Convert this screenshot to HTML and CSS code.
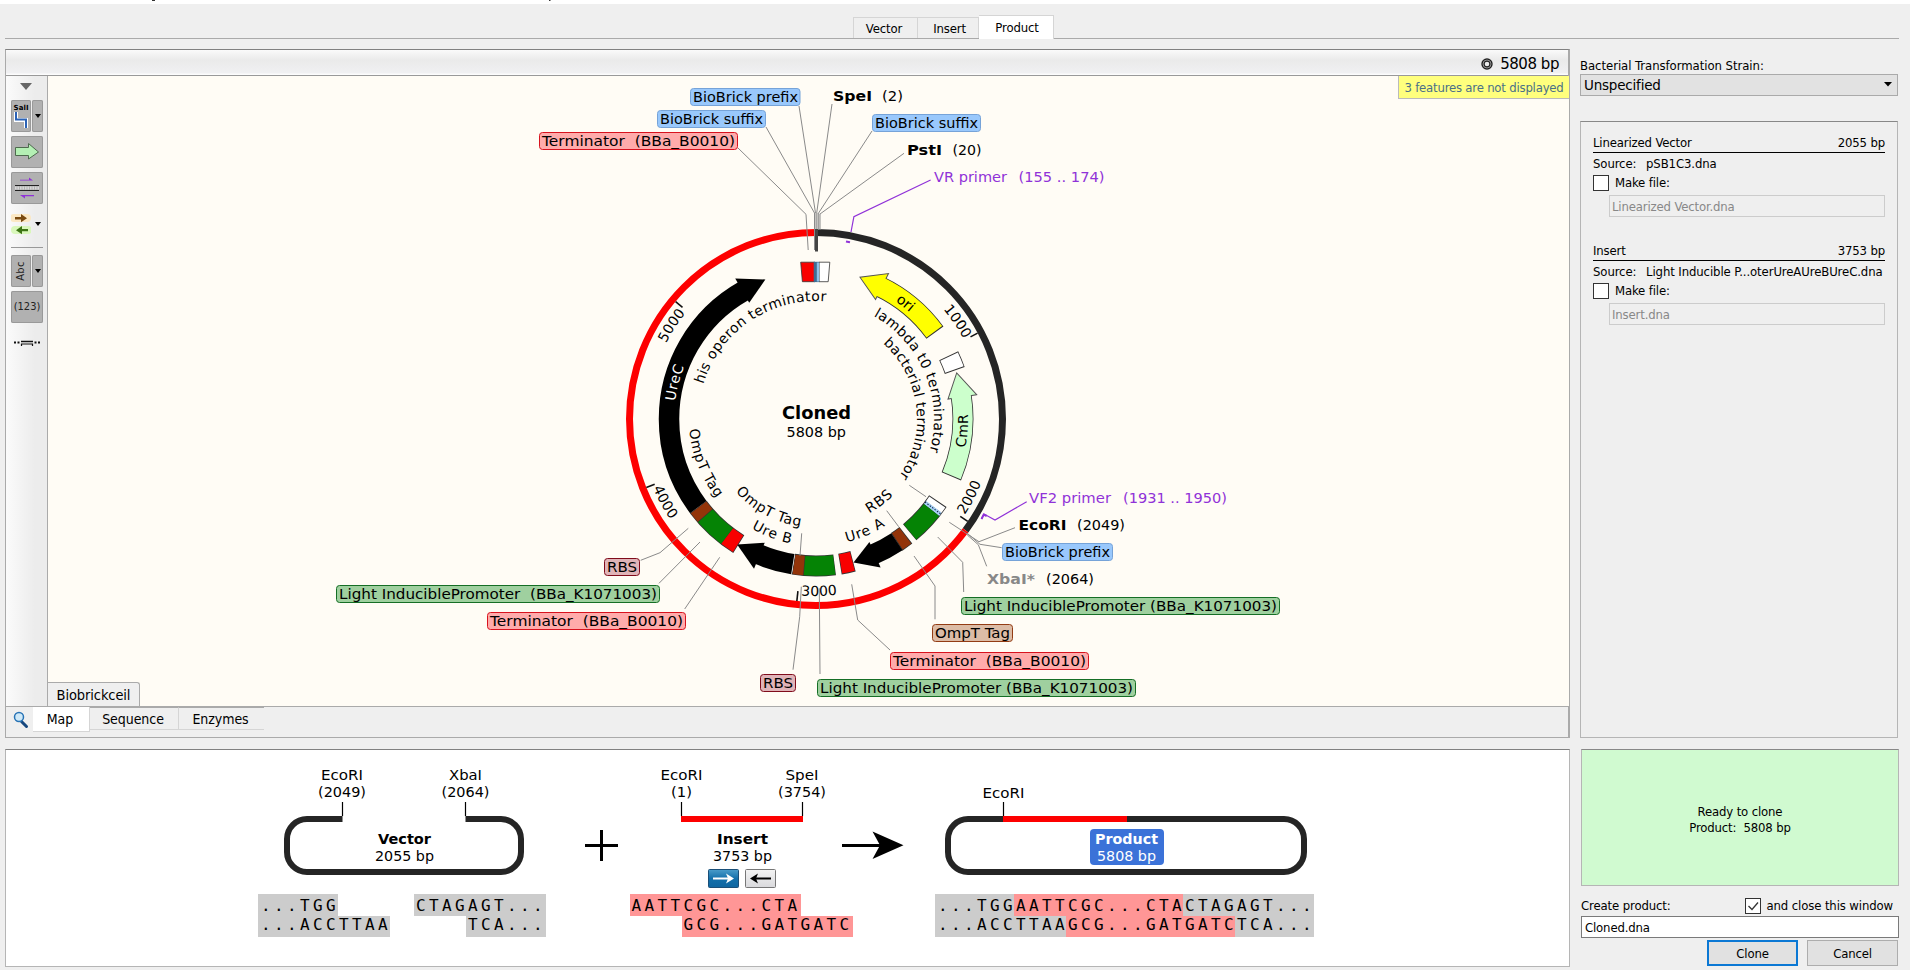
FILE: index.html
```html
<!DOCTYPE html>
<html lang="en">
<head>
<meta charset="utf-8">
<title>Insert Fragment</title>
<link rel="stylesheet" href="styles.css">
</head>
<body>
<div class="strip"><svg width="600" height="4"><path d="M152 0h3v1h-3zM549 0h1.500v1h-1.500z" fill="#333"/></svg></div>
<nav class="steps"><span class="step">Vector</span><span class="step">Insert</span><span class="step on">Product</span></nav>
<main class="work">
  <section class="left">
    <div class="viewer">
      <header class="head">
        <svg width="12" height="12"><circle cx="6" cy="6" r="4" fill="none" stroke="#222" stroke-width="3.400"/><circle cx="6" cy="6" r="4" fill="none" stroke="#aaa" stroke-width=".8"/></svg>
        <span>5808 bp</span>
      </header>
      <div class="body">
        <aside class="tools">
          <svg class="tri" width="12" height="8"><path d="M0 0h12L6 7z" fill="#666"/></svg>
          <div class="split">
            <span class="btn main"><svg width="20" height="32"><text x="2.500" y="9.500" class="sal" textLength="15">SalI</text><path d="M5 12v8h10v8" fill="none" stroke="#fff" stroke-width="4"/><path d="M5 12v7.500h10v8.500" fill="none" stroke="#2b62b5" stroke-width="2"/></svg></span>
            <span class="btn drop"><i class="car"></i></span>
          </div>
          <span class="btn"><svg width="32" height="32"><path d="M4.500 11.500h13v-4l10 8.500-10 7v-3.500h-13z" fill="#b4f0b4" stroke="#4e6a4e"/></svg></span>
          <span class="btn"><svg width="32" height="32"><path d="M9 8.500h13l-4-3v2.200H9zM23 23H9l5 3.500v-2.300h9z" fill="#9032d8"/><path d="M4 13.500h24M4 18.500h24" stroke="#222"/><path d="M4 16h24" stroke="#d8d8d8" stroke-width="3" stroke-dasharray="1.500 1"/></svg></span>
          <div class="split">
            <span class="flat main"><svg width="20" height="32"><path d="M3 10h13" stroke="#fbe8c4" stroke-width="8" stroke-linecap="round"/><path d="M4 22h13" stroke="#d9f7bb" stroke-width="8" stroke-linecap="round"/><path d="M4 9h6V6l6 4.200-6 4V11.500H4z" fill="#7a4a10"/><path d="M17 21h-6v-3l-6 4.200 6 4v-3h6z" fill="#3c7414"/></svg></span>
            <span class="flat drop"><i class="car"></i></span>
          </div>
          <hr>
          <div class="split">
            <span class="btn main"><span class="abc">Abc</span></span>
            <span class="btn drop"><i class="car"></i></span>
          </div>
          <span class="btn num">(123)</span>
          <span class="flat"><svg width="32" height="32"><path d="M3 15.500h2M6.500 15.500h2M23.500 15.500h2M27 15.500h2" stroke="#111" stroke-width="2"/><path d="M10 14.500h12" stroke="#111" stroke-width="1.500"/><path d="M10.500 19v-2h11v2" fill="none" stroke="#111" stroke-width="1.200"/></svg></span>
        </aside>
        <div class="canvas">
<svg class="map" width="1521" height="630" viewBox="48 76 1521 630">
  <defs>
    <path id="c118" d="M0-118A118 118 0 0 1 0 118A118 118 0 0 1 0-118"/>
    <path id="c101" d="M0-101A101 101 0 0 1 0 101A101 101 0 0 1 0-101"/>
    <path id="c142" d="M0-142A142 142 0 0 1 0 142A142 142 0 0 1 0-142"/>
    <path id="c168" d="M0-168A168 168 0 0 1 0 168A168 168 0 0 1 0-168"/>
    <path id="w177" d="M0 177A177 177 0 0 0 0-177A177 177 0 0 0 0 177"/>
    <path id="w152" d="M0 152A152 152 0 0 0 0-152A152 152 0 0 0 0 152"/>
    <path id="w127" d="M0 127A127 127 0 0 0 0-127A127 127 0 0 0 0 127"/>
    <path id="w108" d="M0 108.500A108.500 108.500 0 0 0 0-108.500A108.500 108.500 0 0 0 0 108.500"/>
  </defs>
  <g transform="translate(816 419)">
    <!-- backbone -->
    <g transform="rotate(-90)" fill="none" stroke-width="7">
      <circle r="186.500" pathLength="360" stroke="#252525" stroke-dasharray="126.700 360"/>
      <circle r="186.500" pathLength="360" stroke="#fd0000" stroke-dasharray="233.300 360" stroke-dashoffset="-126.700"/>
    </g>
    <g stroke="#111" stroke-width="1.600">
      <path d="M0-175V-183" transform="rotate(62)"/><path d="M0-174V-183" transform="rotate(124)"/><path d="M0-173V-183" transform="rotate(186)"/><path d="M0-174V-183" transform="rotate(248)"/><path d="M0-174V-183" transform="rotate(309.900)"/>
    </g>
    <!-- feature outlines and arrowheads -->
    <g transform="rotate(-90)" class="seg" stroke="#333" stroke-width="21">
      <circle r="147" pathLength="360" stroke-dasharray="28.400 360" stroke-dashoffset="-25.600"/>
      <circle r="147" pathLength="360" stroke-dasharray="32 360" stroke-dashoffset="-81"/>
      <circle r="147" pathLength="360" stroke-dasharray="6.200 360" stroke-dashoffset="-64.500"/>
      <circle r="147" pathLength="360" stroke-dasharray="16.400 360" stroke-dashoffset="-124"/>
      <circle r="147" pathLength="360" stroke-dasharray="4.400 360" stroke-dashoffset="-142.300"/>
      <circle r="147" pathLength="360" stroke-dasharray="5.200 360" stroke-dashoffset="-165.400"/>
      <circle r="147" pathLength="360" stroke-dasharray="16.200 360" stroke-dashoffset="-172.700"/>
      <circle r="147" pathLength="360" stroke-dasharray="21.500 360" stroke-dashoffset="-211.700"/>
    </g>
    <g stroke-width="1">
      <path d="M0-162.500V-133.500L-23.900-146.500Z" transform="rotate(26.500)" fill="#ff0" stroke="#555"/>
      <path d="M0-162.500V-133.500L-24.500-146Z" transform="rotate(81.400)" fill="#cfc" stroke="#555"/>
      <path d="M0-162V-134L22.800-146.500Z" transform="rotate(156.500)"/>
      <path d="M0-162V-134L24.800-146.200Z" transform="rotate(202.500)"/>
      <path d="M0-162V-134L25.700-146.200Z" transform="rotate(330.100)"/>
    </g>
    <g transform="rotate(-90)" class="seg" stroke-width="19.400">
      <circle r="147" pathLength="360" stroke="#ff0" stroke-dasharray="27.900 360" stroke-dashoffset="-25.700"/>
      <circle r="147" pathLength="360" stroke="#cfc" stroke-dasharray="32 360" stroke-dashoffset="-80.600"/>
      <circle r="147" pathLength="360" stroke="#fff" stroke-dasharray="5.500 360" stroke-dashoffset="-64.850"/>
      <circle r="147" pathLength="360" stroke="#fff" stroke-dasharray="2.400 360" stroke-dashoffset="-124.400"/>
      <circle r="147" pathLength="360" stroke="#a9d3f8" stroke-dasharray="1.500 360" stroke-dashoffset="-126.700"/>
      <circle r="147" pathLength="360" stroke="#058305" stroke-dasharray="12 360" stroke-dashoffset="-128.200"/>
      <circle r="147" pathLength="360" stroke="#933409" stroke-dasharray="3.800 360" stroke-dashoffset="-142.600"/>
      <circle r="147" pathLength="360" stroke="#000" stroke-width="20.500" stroke-dasharray="10.400 360" stroke-dashoffset="-146.600"/>
      <circle r="147" pathLength="360" stroke="#f90000" stroke-dasharray="4.700 360" stroke-dashoffset="-165.650"/>
      <circle r="147" pathLength="360" stroke="#058305" stroke-dasharray="11.600 360" stroke-dashoffset="-172.900"/>
      <circle r="147" pathLength="360" stroke="#933409" stroke-dasharray="3.900 360" stroke-dashoffset="-184.700"/>
      <circle r="147" pathLength="360" stroke="#fff" stroke-dasharray=".2 360" stroke-dashoffset="-188.850"/>
      <circle r="147" pathLength="360" stroke="#000" stroke-width="20.500" stroke-dasharray="13.800 360" stroke-dashoffset="-189.100"/>
      <circle r="147" pathLength="360" stroke="#f90000" stroke-dasharray="5.200 360" stroke-dashoffset="-212"/>
      <circle r="147" pathLength="360" stroke="#058305" stroke-dasharray="11.500 360" stroke-dashoffset="-217.300"/>
      <circle r="147" pathLength="360" stroke="#933409" stroke-dasharray="4 360" stroke-dashoffset="-229"/>
      <circle r="147" pathLength="360" stroke="#000" stroke-width="20.500" stroke-dasharray="97.300 360" stroke-dashoffset="-233.200"/>
    </g>
    <path d="M-15.300-156.800H-1V-137.300H-13.600z" fill="#f90000" stroke="#333" stroke-width=".8"/>
    <path d="M3-156.800H13.800L12.200-137.300H3z" fill="#fff" stroke="#333" stroke-width=".8"/>
    <path d="M-2.300-157.200h5.500v20.300h-5.500z" fill="#3d6d92"/><path d="M.8-156.500h2.200v19H.8z" fill="#8fc0e8"/>
    <path d="M0-137V-157" transform="rotate(127.300)" stroke="#124" stroke-dasharray="1.500 1.500"/>
    <!-- curved captions -->
    <g class="lbl">
      <text transform="rotate(287.100)" textLength="160"><textPath href="#c118">his operon terminator</textPath></text>
      <text transform="rotate(29.200)" textLength="158"><textPath href="#c118">lambda t0 terminator</textPath></text>
      <text transform="rotate(41.600)" textLength="146"><textPath href="#c101">bacterial terminator</textPath></text>
      <text transform="rotate(34)"><textPath href="#c142">ori</textPath></text>
      <text transform="rotate(277.200)" fill="#fff" textLength="36"><textPath href="#c142">UreC</textPath></text>
      <text transform="rotate(49.300)" textLength="36"><textPath href="#c168">1000</textPath></text>
      <text transform="rotate(296.800)" textLength="36"><textPath href="#c168">5000</textPath></text>
      <text transform="rotate(-57.200)" textLength="36"><textPath href="#w177">2000</textPath></text>
      <text transform="rotate(4.800)" textLength="36"><textPath href="#w177">3000</textPath></text>
      <text transform="rotate(67)" textLength="36"><textPath href="#w177">4000</textPath></text>
      <text transform="rotate(-79)" textLength="34"><textPath href="#w152">CmR</textPath></text>
      <text transform="rotate(85.300)" textLength="75"><textPath href="#w127">OmpT Tag</textPath></text>
      <text transform="rotate(47.800)" textLength="75"><textPath href="#w108">OmpT Tag</textPath></text>
      <text transform="rotate(30.500)" textLength="42"><textPath href="#w127">Ure B</textPath></text>
      <text transform="rotate(-14)" textLength="42"><textPath href="#w127">Ure A</textPath></text>
      <text transform="rotate(-29.500)" textLength="30"><textPath href="#w108">RBS</textPath></text>
    </g>
  </g>
  <!-- leader lines -->
  <g class="lead">
    <path d="M799 106L815.500 213M832 104L816.700 213M766 127L814.500 213M738 148L806 214.300 808.200 250M872 131L818.400 213.300M904 153.300L820 214"/>
    <path d="M814.500 213V250M817 213V250M818.700 213V230M820 214V230M816 213V250"/>
    <path d="M909.300 485.300L926 496.700M886.700 510.700L898.700 526.700M801.700 533.300L800 555.700"/>
    <path d="M688.300 528.300L660 552.700 640.700 560.300M700 542L659 583.300M719.700 557.300L684.700 609M801.300 586.700L799.700 616.700 793 669.700M819.300 588.300L820 674"/>
    <path d="M851.700 584.300L857.700 620 890 650M914 556L935 586V619.300M937.700 537L962.700 562.300 963.700 592M949.300 522.300L979 541.700 1015 527.700M967.300 533.300L980 544.300 1001.700 547.700M967.300 535L978.300 544.700 986.700 566.300"/>
    <path d="M816.500 229V251.500" stroke="#444" stroke-width="3"/>
  </g>
  <g class="primer">
    <path d="M930.600 180L853.900 216.700 851 232"/><path d="M846 241.500l4 .8" stroke-width="2"/><path d="M981.500 519L984 514 995 520 1026.700 501.700"/><path d="M981.500 519l2.200-4.500 3 1.500" stroke-width="2"/>
  </g>
  <!-- boxed labels -->
  <g class="box">
    <g fill="#99c8fc" stroke="#76a3d8">
      <rect x="690.500" y="88.500" width="109.500" height="17" rx="3"/><rect x="657.500" y="110.500" width="108" height="17" rx="3"/><rect x="872.500" y="114.500" width="108" height="17" rx="3"/><rect x="1002.500" y="543.500" width="110" height="17" rx="3"/>
    </g>
    <g fill="#ffabab" stroke="#d8121e">
      <rect x="539.500" y="132.500" width="198" height="17" rx="3"/><rect x="487.500" y="612.500" width="198" height="17" rx="3"/><rect x="890.500" y="652.500" width="198" height="17" rx="3"/>
    </g>
    <g fill="#9fd09f" stroke="#156e25">
      <rect x="336.500" y="585.500" width="323" height="17" rx="3"/><rect x="961.500" y="597.500" width="318" height="17" rx="3"/><rect x="817.500" y="679.500" width="318" height="17" rx="3"/>
    </g>
    <g fill="#e0b4b8" stroke="#800c1c"><rect x="604.500" y="558.500" width="35" height="17" rx="3"/><rect x="760.500" y="674.500" width="35" height="17" rx="3"/></g>
    <rect x="932.500" y="624.500" width="80" height="17" rx="3" fill="#dcbca6" stroke="#933c14"/>
  </g>
  <g class="lbl flatlbl">
    <text x="693" y="102" textLength="105" lengthAdjust="spacingAndGlyphs">BioBrick prefix</text>
    <text x="660" y="124" textLength="103" lengthAdjust="spacingAndGlyphs">BioBrick suffix</text>
    <text x="875" y="128" textLength="103" lengthAdjust="spacingAndGlyphs">BioBrick suffix</text>
    <text x="1005" y="557" textLength="105" lengthAdjust="spacingAndGlyphs">BioBrick prefix</text>
    <text x="542" y="146" textLength="193" lengthAdjust="spacingAndGlyphs">Terminator &#160;(BBa_B0010)</text>
    <text x="490" y="626" textLength="193" lengthAdjust="spacingAndGlyphs">Terminator &#160;(BBa_B0010)</text>
    <text x="893" y="666" textLength="193" lengthAdjust="spacingAndGlyphs">Terminator &#160;(BBa_B0010)</text>
    <text x="339" y="599" textLength="318" lengthAdjust="spacingAndGlyphs">Light InduciblePromoter &#160;(BBa_K1071003)</text>
    <text x="964" y="611" textLength="313" lengthAdjust="spacingAndGlyphs">Light InduciblePromoter (BBa_K1071003)</text>
    <text x="820" y="693" textLength="313" lengthAdjust="spacingAndGlyphs">Light InduciblePromoter (BBa_K1071003)</text>
    <text x="607" y="572" textLength="30" lengthAdjust="spacingAndGlyphs">RBS</text>
    <text x="763" y="688" textLength="30" lengthAdjust="spacingAndGlyphs">RBS</text>
    <text x="935" y="638" textLength="75" lengthAdjust="spacingAndGlyphs">OmpT Tag</text>
    <text x="833" y="101" class="b" textLength="39" lengthAdjust="spacingAndGlyphs">SpeI</text><text x="882" y="101" textLength="21" lengthAdjust="spacingAndGlyphs">(2)</text>
    <text x="907" y="155" class="b" textLength="35" lengthAdjust="spacingAndGlyphs">PstI</text><text x="952.500" y="155" textLength="29" lengthAdjust="spacingAndGlyphs">(20)</text>
    <text x="1018.500" y="530" class="b" textLength="48" lengthAdjust="spacingAndGlyphs">EcoRI</text><text x="1077" y="530" textLength="48" lengthAdjust="spacingAndGlyphs">(2049)</text>
    <text x="987" y="583.500" class="b" fill="#888" textLength="48" lengthAdjust="spacingAndGlyphs">XbaI*</text><text x="1046" y="583.500" textLength="48" lengthAdjust="spacingAndGlyphs">(2064)</text>
    <g fill="#9032d8"><text x="934" y="182" textLength="73" lengthAdjust="spacingAndGlyphs">VR primer</text><text x="1018.500" y="182" textLength="86" lengthAdjust="spacingAndGlyphs">(155 .. 174)</text><text x="1029" y="502.500" textLength="82" lengthAdjust="spacingAndGlyphs">VF2 primer</text><text x="1123" y="502.500" textLength="104" lengthAdjust="spacingAndGlyphs">(1931 .. 1950)</text></g>
    <text x="782" y="418.500" class="b big" textLength="69" lengthAdjust="spacingAndGlyphs">Cloned</text>
    <text x="786.500" y="437" textLength="59.500" lengthAdjust="spacingAndGlyphs">5808 bp</text>
  </g>
</svg>
          <span class="note">3 features are not displayed</span>
          <span class="file">Biobrickceil</span>
        </div>
      </div>
      <footer class="views">
        <svg class="mag" width="16" height="20"><path d="M8.500 11.500l5 5" stroke="#16477e" stroke-width="3" stroke-linecap="round"/><circle cx="6" cy="7" r="4.500" fill="#cfe9f8" stroke="#2773b5" stroke-width="1.500"/></svg>
        <span class="view on">Map</span><span class="view seq">Sequence</span><span class="view enz">Enzymes</span>
      </footer>
    </div>
    <div class="scheme">
<svg width="1563" height="216" viewBox="6 750 1563 216">
  <g fill="none" stroke="#252525" stroke-width="6">
    <path d="M342.500 819H307A20 20 0 0 0 287 839V852A20 20 0 0 0 307 872H501A20 20 0 0 0 521 852V839A20 20 0 0 0 501 819H465.500"/>
    <rect x="948" y="819" width="356" height="53" rx="20"/>
    <path d="M681 819H803M1003 819H1127" stroke="#fd0000"/>
  </g>
  <path d="M342.500 802v14M465.500 802v14M681.500 802v14M802.500 802v14M1003.500 802v14" stroke="#000" stroke-width="1.200"/>
  <path d="M585 845.500H618M601.500 830V861M842 845.500H885" stroke="#000" stroke-width="3"/>
  <path d="M872.500 831.500L903.500 845.300 872.500 859 880 845.300z"/>
  <rect x="1090" y="829" width="74" height="36" rx="4" fill="#3b72d8"/>
  <g class="lbl mid flatlbl">
    <text x="342" y="780" textLength="42" lengthAdjust="spacingAndGlyphs">EcoRI</text><text x="342" y="797" textLength="48" lengthAdjust="spacingAndGlyphs">(2049)</text>
    <text x="465.500" y="780" textLength="33" lengthAdjust="spacingAndGlyphs">XbaI</text><text x="465.500" y="797" textLength="48" lengthAdjust="spacingAndGlyphs">(2064)</text>
    <text x="681.500" y="780" textLength="42" lengthAdjust="spacingAndGlyphs">EcoRI</text><text x="681.500" y="797" textLength="21" lengthAdjust="spacingAndGlyphs">(1)</text>
    <text x="802" y="780" textLength="33" lengthAdjust="spacingAndGlyphs">SpeI</text><text x="802" y="797" textLength="48" lengthAdjust="spacingAndGlyphs">(3754)</text>
    <text x="1003.500" y="798" textLength="42" lengthAdjust="spacingAndGlyphs">EcoRI</text>
    <text x="404.500" y="843.500" class="b" textLength="53" lengthAdjust="spacingAndGlyphs">Vector</text><text x="404.500" y="861" textLength="59" lengthAdjust="spacingAndGlyphs">2055 bp</text>
    <text x="742.500" y="843.500" class="b" textLength="51" lengthAdjust="spacingAndGlyphs">Insert</text><text x="742.500" y="861" textLength="59" lengthAdjust="spacingAndGlyphs">3753 bp</text>
    <text x="1126.500" y="843.500" class="b" fill="#fff" textLength="63" lengthAdjust="spacingAndGlyphs">Product</text><text x="1126.500" y="861" fill="#fff" textLength="59" lengthAdjust="spacingAndGlyphs">5808 bp</text>
  </g>
  <defs><linearGradient id="bl" x2="0" y2="1"><stop offset="0" stop-color="#4a9cca"/><stop offset=".5" stop-color="#1470ab"/><stop offset="1" stop-color="#0f66a0"/></linearGradient><linearGradient id="gr" x2="0" y2="1"><stop offset="0" stop-color="#f4f4f4"/><stop offset="1" stop-color="#d9d9dc"/></linearGradient></defs>
  <rect x="708.500" y="869.500" width="30" height="18" rx="1" fill="url(#bl)" stroke="#1a4f78"/>
  <rect x="745.500" y="869.500" width="30" height="18" rx="1" fill="url(#gr)" stroke="#777"/>
  <path d="M713 878.500h16" stroke="#fff" stroke-width="2"/><path d="M726 873.500l8 5-8 5 2-5z" fill="#fff"/>
  <path d="M771 878.500h-16" stroke="#000" stroke-width="2"/><path d="M758 873.500l-8 5 8 5-2-5z"/>
  <g fill="#ccc"><path d="M258 894h80v22h52v21H258zM414 894h132v43h-80v-21h-52zM935 894h379v43H935z"/></g>
  <path d="M630 894h171v22h52v21H682v-21h-52zM1014 894h169v22h52v21h-169v-21h-52z" fill="#ff9696"/>
  <g class="dna">
    <text x="261" y="910.500">...TGG</text><text x="261" y="930">...ACCTTAA</text>
    <text x="416" y="910.500">CTAGAGT...</text><text x="468" y="930">TCA...</text>
    <text x="631.500" y="910.500">AATTCGC...CTA</text><text x="683.500" y="930">GCG...GATGATC</text>
    <text x="938" y="910.500">...TGGAATTCGC...CTACTAGAGT...</text><text x="938" y="930">...ACCTTAAGCG...GATGATCTCA...</text>
  </g>
</svg>
    </div>
  </section>
  <aside class="right">
    <div class="strain">
      <label>Bacterial Transformation Strain:</label>
      <div class="select"><span>Unspecified</span><svg width="9" height="6"><path d="M0 0h8L4 4.500z"/></svg></div>
    </div>
    <div class="parts">
      <div class="part">
        <div class="title"><span>Linearized Vector</span><span>2055 bp</span></div>
        <div class="src"><span>Source:</span>pSB1C3.dna</div>
        <div class="make"><i class="chk"></i>Make file:</div>
        <div class="in off">Linearized Vector.dna</div>
      </div>
      <div class="part">
        <div class="title"><span>Insert</span><span>3753 bp</span></div>
        <div class="src"><span>Source:</span>Light Inducible P...oterUreAUreBUreC.dna</div>
        <div class="make"><i class="chk"></i>Make file:</div>
        <div class="in off">Insert.dna</div>
      </div>
    </div>
    <div class="ready"><span>Ready to clone</span><span>Product:&nbsp; 5808 bp</span></div>
    <div class="create"><span>Create product:</span><span class="make"><i class="chk"><svg width="14" height="14"><path d="M2.500 7l3.500 3.500L12 3.500" fill="none" stroke="#333" stroke-width="1.300"/></svg></i>and close this window</span></div>
    <div class="in name">Cloned.dna</div>
    <div class="acts"><span class="act def">Clone</span><span class="act">Cancel</span></div>
  </aside>
</main>
</body>
</html>
```
FILE: styles.css
```css
* { box-sizing: border-box; }
body {
  margin: 0; width: 1910px; height: 970px; overflow: hidden; background: #efefef; color: #000;
  font: 13px/16px "DejaVu Sans Condensed", "DejaVu Sans", sans-serif; font-stretch: condensed; letter-spacing: -.15px;
}
svg { display: block; flex: none; }
.strip { height: 4px; background: #fff; }
.steps { height: 35px; margin: 0 11px 0 5px; border-bottom: 1px solid #aaa; display: flex; align-items: flex-end; padding-left: 848px; }
.step { height: 21px; border: 1px solid #d5d5d5; border-bottom: 0; width: 65px; text-align: center; line-height: 22px; padding-right: 3px; }
.step + .step { border-left: 0; width: 61px; padding: 0; text-indent: 3px; }
.step + .step.on { background: #fff; width: 75px; height: 24px; margin-bottom: -1px; line-height: 23px; text-indent: 2px; }
.work { display: flex; margin: 10px 0 0 5px; gap: 10px; }
.left { width: 1565px; display: flex; flex-direction: column; gap: 11px; }
.viewer { height: 689px; border: 1px solid #aaa; border-top-color: #808080; border-right-width: 2px; display: flex; flex-direction: column; }
.head { height: 26px; border-bottom: 1px solid #999; background: linear-gradient(#fafafa, #eaeaea 40%, #f0f0f2 90%, #fff); display: flex; align-items: center; justify-content: flex-end; gap: 7px; padding: 2px 9px 0 0; font: 15px/22px "DejaVu Sans", sans-serif; letter-spacing: -.45px; }
.body { height: 631px; display: flex; border-bottom: 1px solid #aaa; }
.tools { width: 42px; border-right: 1px solid #aaa; background: linear-gradient(90deg, #fbfbfb, #ececec 70%); display: flex; flex-direction: column; gap: 4px; padding: 7px 4px 0 5px; }
.tri { margin: 0 0 5px 9px; }
.split { display: flex; gap: 1px; }
.btn, .flat { width: 32px; height: 32px; display: flex; align-items: center; justify-content: center; border-radius: 2px; }
.btn { background: #b1b1b1; box-shadow: inset 0 0 0 1px #999; }
.split .main { width: 20px; }
.split .drop { width: 11px; }
.car { border: 3px solid transparent; border-top: 4px solid #000; border-bottom: 0; }
.tools hr { width: 32px; margin: 3px 0 3px; border: 0; border-top: 1px solid #999; }
.abc { transform: rotate(-90deg); font-size: 11px; letter-spacing: .4px; color: #222; }
.num { font-size: 11px; letter-spacing: 0; color: #222; }
.sal { font: bold 7px "DejaVu Sans", sans-serif; }
.canvas { position: relative; width: 1521px; height: 630px; background: #fffcf5; }
.note { position: absolute; right: 0; top: 0; width: 171px; height: 23px; background: #ffff7d; border: 1px solid #bbb; border-top: 0; border-right: 0; color: #4a7088; line-height: 24px; text-align: center; letter-spacing: -.2px; }
.file { position: absolute; left: 0; bottom: 0; width: 92px; height: 24px; border: 1px solid #aaa; border-left: 0; border-bottom: 0; border-top-right-radius: 3px; background: #efefef; line-height: 24px; text-align: center; font-size: 14.500px; letter-spacing: -.1px; }
.views { display: flex; font-size: 14px; letter-spacing: -.05px; }
.mag { margin: 3px 4px 0 7px; }
.view { height: 23px; line-height: 23px; border-right: 1px solid #d5d5d5; border-bottom: 1px solid #d5d5d5; border-top: 1px solid #aaa; text-align: center; padding-right: 2px; }
.view.on { width: 57px; height: 25px; line-height: 25px; background: #fff; border-top: 0; }
.seq { width: 89px; }
.enz { width: 85px; border-right: 0; }
.scheme { height: 218px; background: #fff; border: 1px solid #b5b5b5; border-top-color: #808080; }
.lbl text { font: 14px "DejaVu Sans", sans-serif; letter-spacing: 0; }
.flatlbl text { font-size: 14.800px; }
.lbl .b { font-weight: bold; }
.lbl .big { font-size: 17px; }
.mid text { text-anchor: middle; }
.seg circle { fill: none; }
.lead { fill: none; stroke: #8a8a8a; stroke-width: 1; }
.primer { fill: none; stroke: #9032d8; stroke-width: 1.2; }
.dna { font: 16px "DejaVu Sans Mono", monospace; letter-spacing: 3.37px; }
.right { width: 319px; display: flex; flex-direction: column; }
.strain { height: 72px; padding-top: 9px; width: 318px; letter-spacing: -.05px; }
.select { height: 22px; background: #e2e2e2; border: 1px solid #aaa; display: flex; align-items: center; justify-content: space-between; padding: 0 4px 0 3px; font: 13.500px/20px "DejaVu Sans", sans-serif; letter-spacing: -.2px; }
.parts { height: 617px; width: 318px; border: 1px solid #b5b5b5; border-top-color: #888; padding: 13px 12px 0; }
.part { height: 108px; }
.title { height: 18px; border-bottom: 1px solid #000; display: flex; justify-content: space-between; }
.src { margin-top: 3px; height: 19px; white-space: nowrap; display: flex; letter-spacing: -.1px; }
.src span { width: 53px; }
.make { display: flex; align-items: center; gap: 6px; height: 16px; }
.chk { width: 16px; height: 16px; border: 1px solid #333; background: #fff; }
.in { height: 22px; border: 1px solid #7a7a7a; background: #fff; padding-left: 3px; line-height: 21px; }
.in.off { margin: 4px 0 0 16px; background: #efefef; border-color: #ccc; color: #888; padding-left: 2px; }
.ready { margin: 11px 0 0 1px; height: 137px; background: #d0fad0; border: 1px solid #b5b5b5; border-top-color: #888; display: flex; flex-direction: column; align-items: center; justify-content: center; padding-top: 4px; }
.create { margin: 12px 6px 2px 1px; display: flex; justify-content: space-between; align-items: center; letter-spacing: -.12px; }
.name { margin-left: 1px; }
.acts { display: flex; justify-content: flex-end; gap: 9px; margin: 2px 1px 0 0; }
.act { width: 91px; height: 26px; background: #e1e1e1; border: 1px solid #adadad; text-align: center; line-height: 25px; }
.def { border: 2px solid #0b78d4; line-height: 23px; }
```
